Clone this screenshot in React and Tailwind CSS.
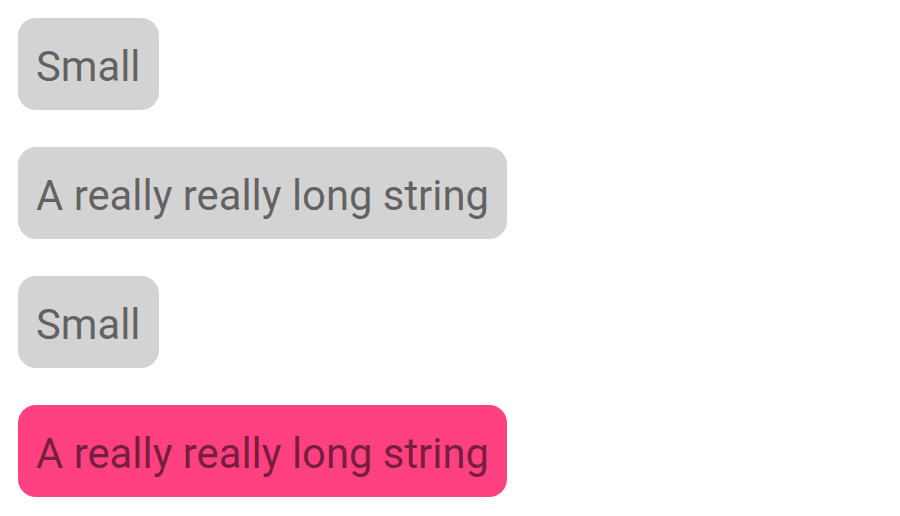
const items = [
  { label: "Small", active: false },
  { label: "A really really long string", active: false },
  { label: "Small", active: false },
  { label: "A really really long string", active: true },
];

export default function App() {
  return (
    <div
      className="w-[900px] h-[516px] bg-white flex flex-col items-start gap-[37px] p-[18px]"
      style={{ fontFamily: "Roboto, 'Noto Sans', sans-serif" }}
    >
      {items.map((item, i) => (
        <div
          key={i}
          className={`rounded-[18px] px-[18px] pt-[21px] pb-[15px] text-[41.8px] leading-[56px] text-black/55 whitespace-nowrap ${
            item.active ? "bg-[#ff4081]" : "bg-[#d3d3d3]"
          }`}
        >
          {item.label}
        </div>
      ))}
    </div>
  );
}
